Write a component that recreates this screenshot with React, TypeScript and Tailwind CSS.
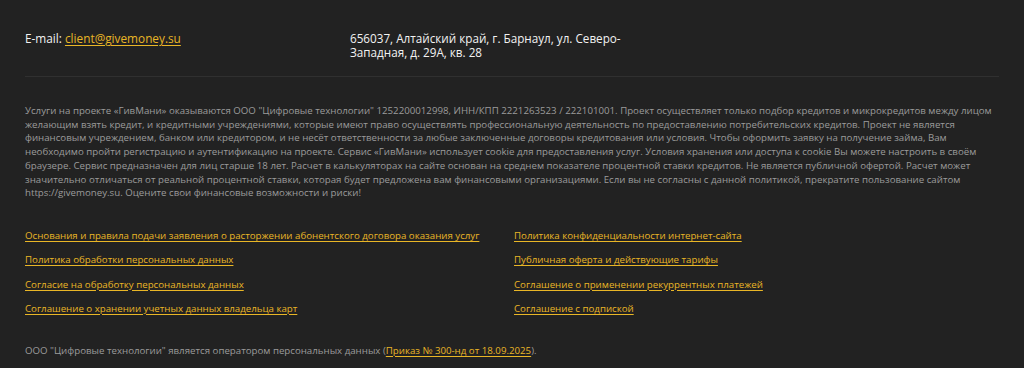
const links: [string, string][] = [
  [
    "Основания и правила подачи заявления о расторжении абонентского договора оказания услуг",
    "Политика конфиденциальности интернет-сайта",
  ],
  ["Политика обработки персональных данных", "Публичная оферта и действующие тарифы"],
  ["Согласие на обработку персональных данных", "Соглашение о применении рекуррентных платежей"],
  ["Соглашение о хранении учетных данных владельца карт", "Соглашение с подпиской"],
];

const disclaimer =
  "Услуги на проекте «ГивМани» оказываются ООО \"Цифровые технологии\" 1252200012998, ИНН/КПП 2221263523 / 222101001. Проект осуществляет только подбор кредитов и микрокредитов между лицом желающим взять кредит, и кредитными учреждениями, которые имеют право осуществлять профессиональную деятельность по предоставлению потребительских кредитов. Проект не является финансовым учреждением, банком или кредитором, и не несёт ответственности за любые заключенные договоры кредитования или условия. Чтобы оформить заявку на получение займа, Вам необходимо пройти регистрацию и аутентификацию на проекте. Сервис «ГивМани» использует cookie для предоставления услуг. Условия хранения или доступа к cookie Вы можете настроить в своём браузере. Сервис предназначен для лиц старше 18 лет. Расчет в калькуляторах на сайте основан на среднем показателе процентной ставки кредитов. Не является публичной офертой. Расчет может значительно отличаться от реальной процентной ставки, которая будет предложена вам финансовыми организациями. Если вы не согласны с данной политикой, прекратите пользование сайтом https://givemoney.su. Оцените свои финансовые возможности и риски!";

export default function App() {
  return (
    <footer className="w-[1024px] h-[368px] bg-[#222222] px-[25px] pt-[31px] font-['Open_Sans',sans-serif] overflow-hidden">
      <div className="flex border-b border-[#303030] pb-[17px] pr-[4px]">
        <div className="w-[325px] text-[11.8px] leading-[14px] text-[#f2f2f2]">
          E-mail:{" "}
          <a href="#" className="text-[#e9b626] underline underline-offset-2">
            client@givemoney.su
          </a>
        </div>
        <div className="w-[280px] text-[11.7px] leading-[14px] text-[#f2f2f2]">
          656037, Алтайский край, г. Барнаул, ул. Северо-Западная, д. 29А, кв. 28
        </div>
      </div>

      <p className="mt-[27px] text-[9.7px] leading-[13.7px] text-[#9b9b9b] pr-[2px]">{disclaimer}</p>

      <div className="mt-[29px] grid grid-cols-[489px_1fr] gap-y-[10.3px]">
        {links.map(([a, b]) => (
          <div key={a} className="contents">
            <a href="#" className="text-[9.7px] leading-[14px] text-[#e9b626] underline underline-offset-2">
              {a}
            </a>
            <a href="#" className="text-[9.7px] leading-[14px] text-[#e9b626] underline underline-offset-2">
              {b}
            </a>
          </div>
        ))}
      </div>

      <p className="mt-[28px] text-[9.7px] leading-[14px] text-[#9b9b9b]">
        ООО "Цифровые технологии" является оператором персональных данных (
        <a href="#" className="text-[#e9b626] underline underline-offset-2">
          Приказ № 300-нд от 18.09.2025
        </a>
        ).
      </p>
    </footer>
  );
}
